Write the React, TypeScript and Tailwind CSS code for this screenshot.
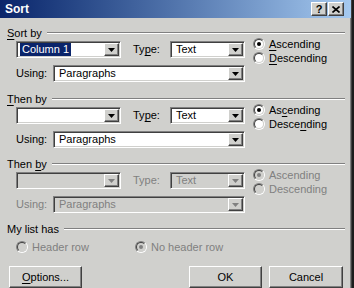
import React from 'react';

const face = 'bg-[#d0d0cd]';
const sunken =
  'border border-t-[#808080] border-l-[#808080] border-b-white border-r-white shadow-[inset_1px_1px_0_#404040,inset_-1px_-1px_0_#d0d0cd]';
const raised =
  'border border-t-white border-l-white border-b-[#404040] border-r-[#404040] shadow-[inset_-1px_-1px_0_#808080]';

function Arrow({ disabled }: { disabled?: boolean }) {
  return (
    <svg width="7" height="4" viewBox="0 0 7 4">
      <path d="M0 0h7L3.5 4z" fill={disabled ? '#808080' : '#000'} />
    </svg>
  );
}

function Combo({
  value,
  width,
  disabled,
  selected,
}: {
  value?: string;
  width: string;
  disabled?: boolean;
  selected?: boolean;
}) {
  return (
    <div className={`flex h-[17px] p-[1px] ${width} ${sunken} ${disabled ? face : 'bg-white'}`}>
      <div className="flex flex-1 items-center overflow-hidden pl-[2px]">
        {value && (
          <span
            className={`px-[2px] leading-[13px] ${
              selected ? 'bg-[#0a246a] text-white' : disabled ? 'text-[#808080]' : 'text-black'
            }`}
          >
            {value}
          </span>
        )}
      </div>
      <div className={`flex w-[15px] items-center justify-center ${face} ${raised}`}>
        <Arrow disabled={disabled} />
      </div>
    </div>
  );
}

function Radio({ checked, disabled, children }: { checked?: boolean; disabled?: boolean; children: React.ReactNode }) {
  return (
    <div className={`flex h-[14px] items-center gap-[4px] ${disabled ? 'text-[#808080]' : 'text-black'}`}>
      <div className="flex h-[12px] w-[12px] items-center justify-center rounded-full border border-t-[#808080] border-l-[#808080] border-b-white border-r-white">
        <div
          className={`flex h-[10px] w-[10px] items-center justify-center rounded-full border border-t-[#404040] border-l-[#404040] border-b-[#d0d0cd] border-r-[#d0d0cd] ${
            disabled ? face : 'bg-white'
          }`}
        >
          {checked && (
            <div className={`h-[4px] w-[4px] rounded-full ${disabled ? 'bg-[#808080]' : 'bg-black'}`} />
          )}
        </div>
      </div>
      <span className="leading-[13px]">{children}</span>
    </div>
  );
}

function GroupHeader({ children }: { children: React.ReactNode }) {
  return (
    <div className="flex h-[14px] items-center gap-[5px] pl-[7px] pr-[6px]">
      <span className="leading-[13px] text-black">{children}</span>
      <div className="h-[2px] flex-1 border-t border-t-[#808080] border-b border-b-white" />
    </div>
  );
}

function U({ children }: { children: React.ReactNode }) {
  return <span className="underline underline-offset-[2px]">{children}</span>;
}

function SortGroup({
  label,
  column,
  disabled,
  typeLabel,
  asc,
  desc,
}: {
  label: React.ReactNode;
  column?: string;
  disabled?: boolean;
  typeLabel: React.ReactNode;
  asc: React.ReactNode;
  desc: React.ReactNode;
}) {
  const muted = disabled ? 'text-[#808080]' : 'text-black';
  return (
    <div className="flex flex-col">
      <GroupHeader>{label}</GroupHeader>
      <div className="flex">
        <div className="flex flex-col pl-[16px]">
          <div className="mt-[1px] flex items-center">
            <Combo width="w-[105px]" value={column} selected={!!column} disabled={disabled} />
            <span className={`ml-[12px] w-[37px] leading-[13px] ${muted}`}>{typeLabel}</span>
            <Combo width="w-[75px]" value="Text" disabled={disabled} />
          </div>
          <div className="mt-[7px] flex items-center">
            <span className={`w-[37px] leading-[13px] ${muted}`}>Using:</span>
            <Combo width="w-[192px]" value="Paragraphs" disabled={disabled} />
          </div>
        </div>
        <div className="-mt-[3px] ml-[8px] flex flex-col">
          <Radio checked disabled={disabled}>
            {asc}
          </Radio>
          <Radio disabled={disabled}>{desc}</Radio>
        </div>
      </div>
    </div>
  );
}

function Button({ children, width }: { children: React.ReactNode; width: string }) {
  return (
    <div className={`flex h-[22px] ${width} items-center justify-center ${face} ${raised}`}>
      <span className="leading-[13px] text-black">{children}</span>
    </div>
  );
}

export default function App() {
  return (
    <div
      className="flex h-[288px] w-[354px] bg-[#1c1c1c] text-[11px]"
      style={{ fontFamily: '"Liberation Sans", Arial, sans-serif' }}
    >
      <div className={`flex h-[288px] w-[352px] flex-col ${face} border-r border-r-[#404040] shadow-[inset_-1px_0_0_#808080]`}>
        {/* Title bar */}
        <div className="flex h-[18px] items-center justify-between bg-gradient-to-r from-[#0a246a] to-[#a6caf0] pl-[5px] pr-[7px]">
          <span className="text-[12px] font-bold leading-[14px] text-white">Sort</span>
          <div className="flex">
            <div className={`flex h-[14px] w-[16px] items-center justify-center ${face} ${raised}`}>
              <span className="text-[11px] font-bold leading-[11px] text-black">?</span>
            </div>
            <div className={`ml-[1px] flex h-[14px] w-[16px] items-center justify-center ${face} ${raised}`}>
              <svg width="8" height="7" viewBox="0 0 8 7">
                <path d="M0.5 0.5L7.5 6.5M7.5 0.5L0.5 6.5" stroke="#000" strokeWidth="1.6" />
              </svg>
            </div>
          </div>
        </div>

        {/* Content */}
        <div className="flex flex-col pt-[8px]">
          <SortGroup
            label={<><U>S</U>ort by</>}
            column="Column 1"
            typeLabel={<>Ty<U>p</U>e:</>}
            asc={<><U>A</U>scending</>}
            desc={<><U>D</U>escending</>}
          />
          <div className="mt-[10px]">
            <SortGroup
              label={<><U>T</U>hen by</>}
              typeLabel={<>Ty<U>p</U>e:</>}
              asc={<>As<U>c</U>ending</>}
              desc={<>Desce<U>n</U>ding</>}
            />
          </div>
          <div className="mt-[9px]">
            <SortGroup
              label={<>Then <U>b</U>y</>}
              disabled
              typeLabel="Type:"
              asc="Ascending"
              desc="Descending"
            />
          </div>

          {/* My list has */}
          <div className="mt-[9px]">
            <GroupHeader>My list has</GroupHeader>
          </div>
          <div className="mt-[4px] flex pl-[16px]">
            <div className="w-[119px]">
              <Radio disabled>Header row</Radio>
            </div>
            <Radio checked disabled>
              No header row
            </Radio>
          </div>

          {/* Buttons */}
          <div className="mt-[12px] flex items-center pl-[9px] pr-[8px]">
            <Button width="w-[73px]">
              <U>O</U>ptions...
            </Button>
            <div className="flex-1" />
            <Button width="w-[73px]">OK</Button>
            <div className="ml-[7px]">
              <Button width="w-[74px]">Cancel</Button>
            </div>
          </div>
        </div>
      </div>
    </div>
  );
}
